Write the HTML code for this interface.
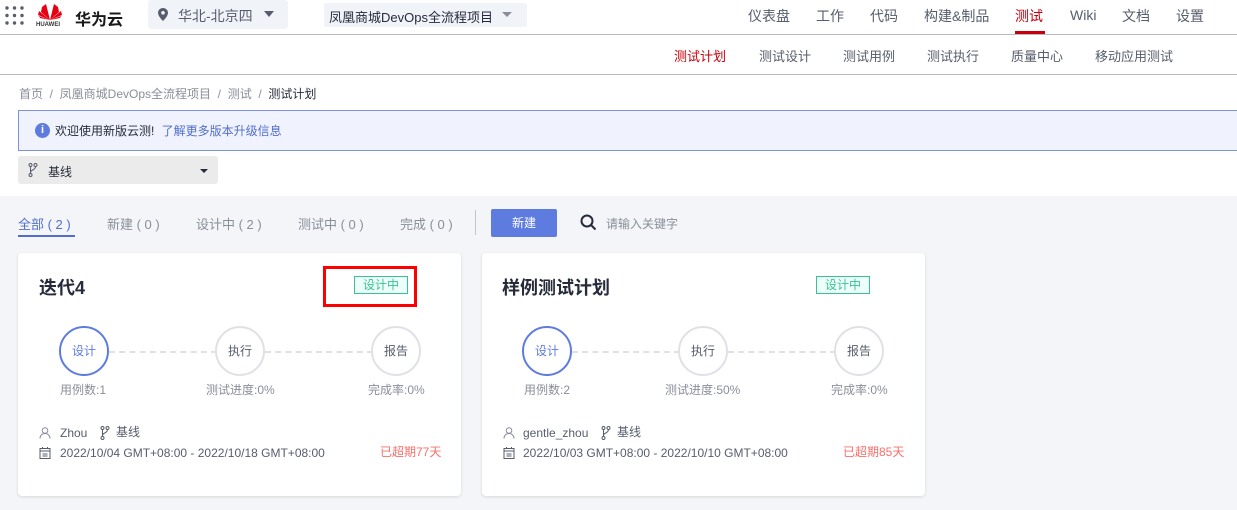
<!DOCTYPE html>
<html><head><meta charset="utf-8"><style>
*{margin:0;padding:0;box-sizing:border-box}
body{width:1237px;height:510px;overflow:hidden;background:#f3f5f8;font-family:"Liberation Sans","Noto Sans CJK SC",sans-serif;font-size:13px;color:#252b3a;position:relative}
.a{position:absolute;white-space:nowrap}
.top{position:absolute;left:0;top:0;width:1237px;height:196px;background:#fff}
.line{position:absolute;left:0;width:1237px;height:1px;background:#b8b8c2}
.nav{font-size:14px;color:#575d6c}
.sub{font-size:13px;color:#575d6c}
.card{position:absolute;top:253px;width:443px;height:243px;background:#fff;border-radius:4px;box-shadow:0 1px 3px rgba(0,0,0,.12)}
.circ{position:absolute;width:50px;height:50px;border-radius:50%;border:2px solid #dfe1e6;text-align:center;line-height:46px;font-size:12px;color:#575d6c;background:#fff}
.circ.on{border-color:#5e7ce0;color:#5e7ce0}
.dash{position:absolute;height:0;border-top:2px dashed #dfe1e6;top:98px}
.lbl{position:absolute;top:128px;font-size:12px;color:#8a8e99;white-space:nowrap}
.tag{position:absolute;top:23px;width:54px;height:18px;border:1px solid #3ac295;background:#edfff9;color:#3ac295;font-size:12px;text-align:center;line-height:16px}
.meta{position:absolute;font-size:12px;color:#575d6c;white-space:nowrap;line-height:16px}
.red{position:absolute;font-size:12px;color:#f66f6a;line-height:16px}
</style></head><body>
<div class="top"></div>
<div class="line" style="top:34px"></div>
<div class="line" style="top:74px"></div>
<svg class="a" style="left:5px;top:6px" width="19" height="19" viewBox="0 0 19 19" fill="#575d6c"><circle cx="2" cy="2" r="1.7"/><circle cx="9.5" cy="2" r="1.7"/><circle cx="17" cy="2" r="1.7"/><circle cx="2" cy="9.5" r="1.7"/><circle cx="9.5" cy="9.5" r="1.7"/><circle cx="17" cy="9.5" r="1.7"/><circle cx="2" cy="17" r="1.7"/><circle cx="9.5" cy="17" r="1.7"/><circle cx="17" cy="17" r="1.7"/></svg>
<svg class="a" style="left:37px;top:2px" width="26" height="20" viewBox="0 0 26 20" fill="#e60012"><path d="M13 18L9 2 5 5 4 10z"/><path d="M13 18L17 2 21 5 22 10z"/><path d="M13 18L2 9 1 13z"/><path d="M13 18L24 9 25 13z"/><path d="M13 18L3 16 2 14z"/><path d="M13 18L23 16 24 14z"/></svg>
<div class="a" style="left:36px;top:22px;font-size:6px;font-weight:bold;color:#333">HUAWEI</div>
<div class="a" style="left:75px;top:6px;font-size:16px;font-weight:bold;color:#191919">华为云</div>
<div class="a" style="left:148px;top:0;width:140px;height:29px;background:#f0f3f8;border-radius:3px"></div>
<svg class="a" style="left:158px;top:8px" width="10" height="13" viewBox="0 0 10 13"><path d="M5 0C2.2 0 0 2.2 0 4.8 0 8.5 5 13 5 13s5-4.5 5-8.2C10 2.2 7.8 0 5 0z" fill="#575d6c"/><circle cx="5" cy="4.8" r="1.8" fill="#f0f3f8"/></svg>
<div class="a" style="left:178px;top:6px;font-size:14px;color:#575d6c">华北-北京四</div>
<div class="a" style="left:264px;top:11px;width:0;height:0;border:5px solid transparent;border-top:6px solid #575d6c;border-bottom:0"></div>
<div class="a" style="left:324px;top:3px;width:203px;height:24px;background:#f0f3f8;border-radius:2px"></div>
<div class="a" style="left:329px;top:7px;font-size:13px;color:#252b3a">凤凰商城DevOps全流程项目</div>
<div class="a" style="left:502px;top:12px;width:0;height:0;border:5px solid transparent;border-top:5px solid #8a8e99;border-bottom:0"></div>
<div class="a nav" style="left:748px;top:6px">仪表盘</div>
<div class="a nav" style="left:816px;top:6px">工作</div>
<div class="a nav" style="left:870px;top:6px">代码</div>
<div class="a nav" style="left:924px;top:6px">构建&amp;制品</div>
<div class="a nav" style="left:1015px;top:6px;color:#c7000b">测试</div>
<div class="a" style="left:1015px;top:31px;width:30px;height:3px;background:#c7000b"></div>
<div class="a nav" style="left:1070px;top:7px">Wiki</div>
<div class="a nav" style="left:1122px;top:6px">文档</div>
<div class="a nav" style="left:1176px;top:6px">设置</div>
<div class="a sub" style="left:674px;top:46px;color:#c7000b">测试计划</div>
<div class="a sub" style="left:759px;top:46px">测试设计</div>
<div class="a sub" style="left:843px;top:46px">测试用例</div>
<div class="a sub" style="left:927px;top:46px">测试执行</div>
<div class="a sub" style="left:1011px;top:46px">质量中心</div>
<div class="a sub" style="left:1095px;top:46px">移动应用测试</div>
<div class="a" style="left:19px;top:85px;font-size:12px;color:#8a8e99">首页 &nbsp;/ &nbsp;凤凰商城DevOps全流程项目 &nbsp;/ &nbsp;测试 &nbsp;/ &nbsp;<span style="color:#252b3a">测试计划</span></div>
<div class="a" style="left:18px;top:110px;width:1230px;height:41px;background:#f0f3fd;border:1px solid #7d93e0"></div>
<div class="a" style="left:35px;top:123px;width:15px;height:15px;border-radius:50%;background:#5e7ce0;color:#fff;font-size:11px;font-weight:bold;text-align:center;line-height:15px">i</div>
<div class="a" style="left:55px;top:122px;font-size:12px;color:#252b3a">欢迎使用新版云测! <span style="color:#526ecc;margin-left:4px">了解更多版本升级信息</span></div>
<div class="a" style="left:18px;top:156px;width:200px;height:28px;background:#ebebeb;border-radius:3px"></div>
<svg class="a" style="left:28px;top:163px" width="10" height="14" viewBox="0 0 10 14" fill="none" stroke="#575d6c" stroke-width="1"><circle cx="2.5" cy="2" r="1.5"/><circle cx="7.5" cy="2" r="1.5"/><circle cx="2.5" cy="12" r="1.5"/><path d="M2.5 3.5v7M7.5 3.5c0 4-5 3-5 6"/></svg>
<div class="a" style="left:48px;top:163px;font-size:12px;color:#252b3a">基线</div>
<div class="a" style="left:200px;top:169px;width:0;height:0;border:4px solid transparent;border-top:4px solid #252b3a;border-bottom:0"></div>
<div class="a" style="left:18px;top:214px;font-size:13px;color:#526ecc">全部 ( 2 )</div>
<div class="a" style="left:18px;top:235px;width:57px;height:2px;background:#526ecc"></div>
<div class="a" style="left:107px;top:214px;font-size:13px;color:#8a8e99">新建 ( 0 )</div>
<div class="a" style="left:196px;top:214px;font-size:13px;color:#8a8e99">设计中 ( 2 )</div>
<div class="a" style="left:298px;top:214px;font-size:13px;color:#8a8e99">测试中 ( 0 )</div>
<div class="a" style="left:400px;top:214px;font-size:13px;color:#8a8e99">完成 ( 0 )</div>
<div class="a" style="left:475px;top:210px;width:1px;height:25px;background:#c0c4cc"></div>
<div class="a" style="left:491px;top:209px;width:66px;height:28px;background:#5e7ce0;border-radius:2px;color:#fff;font-size:12px;text-align:center;line-height:28px">新建</div>
<svg class="a" style="left:580px;top:214px" width="17" height="17" viewBox="0 0 17 17" fill="none" stroke="#252b3a" stroke-width="2"><circle cx="7" cy="7" r="5.5"/><path d="M11 11l4.5 4.5"/></svg>
<div class="a" style="left:606px;top:215px;font-size:12px;color:#8a8e99">请输入关键字</div>

<div class="card" style="left:18px">
<div class="a" style="left:21px;top:21px;font-size:18px;font-weight:bold;color:#252b3a">迭代4</div>
<div class="tag" style="left:336px">设计中</div>
<div class="a" style="left:305px;top:13px;width:94px;height:41px;border:3px solid #f00"></div>
<div class="dash" style="left:91px;width:108px"></div><div class="dash" style="left:247px;width:108px"></div>
<div class="circ on" style="left:41px;top:73px">设计</div>
<div class="circ" style="left:197px;top:73px">执行</div>
<div class="circ" style="left:353px;top:73px">报告</div>
<div class="lbl" style="left:42px">用例数:1</div>
<div class="lbl" style="left:188px">测试进度:0%</div>
<div class="lbl" style="left:350px">完成率:0%</div>
<svg class="a" style="left:21px;top:174px" width="12" height="12" viewBox="0 0 12 12" fill="none" stroke="#8a8e99"><circle cx="6" cy="3.5" r="2.8"/><path d="M1 11.5c0-3 2.2-5 5-5s5 2 5 5"/></svg>
<div class="meta" style="left:42px;top:172px">Zhou</div>
<svg class="a" style="left:82px;top:173px" width="10" height="14" viewBox="0 0 10 14" fill="none" stroke="#575d6c"><circle cx="2.5" cy="2" r="1.5"/><circle cx="7.5" cy="2" r="1.5"/><circle cx="2.5" cy="12" r="1.5"/><path d="M2.5 3.5v7M7.5 3.5c0 4-5 3-5 6"/></svg>
<div class="meta" style="left:98px;top:171px">基线</div>
<svg class="a" style="left:21px;top:194px" width="12" height="12" viewBox="0 0 12 12" fill="none" stroke="#575d6c"><rect x="1" y="1.5" width="10" height="10"/><path d="M1 4h10M3.5 7h5M3.5 9h5M3.5 0v2M8.5 0v2"/></svg>
<div class="meta" style="left:42px;top:192px">2022/10/04 GMT+08:00 - 2022/10/18 GMT+08:00</div>
<div class="red" style="left:362px;top:191px">已超期77天</div>
</div>

<div class="card" style="left:482px">
<div class="a" style="left:20px;top:21px;font-size:18px;font-weight:bold;color:#252b3a">样例测试计划</div>
<div class="tag" style="left:334px">设计中</div>
<div class="dash" style="left:90px;width:108px"></div><div class="dash" style="left:246px;width:108px"></div>
<div class="circ on" style="left:40px;top:73px">设计</div>
<div class="circ" style="left:196px;top:73px">执行</div>
<div class="circ" style="left:352px;top:73px">报告</div>
<div class="lbl" style="left:42px">用例数:2</div>
<div class="lbl" style="left:183px">测试进度:50%</div>
<div class="lbl" style="left:349px">完成率:0%</div>
<svg class="a" style="left:21px;top:174px" width="12" height="12" viewBox="0 0 12 12" fill="none" stroke="#8a8e99"><circle cx="6" cy="3.5" r="2.8"/><path d="M1 11.5c0-3 2.2-5 5-5s5 2 5 5"/></svg>
<div class="meta" style="left:41px;top:172px">gentle_zhou</div>
<svg class="a" style="left:119px;top:173px" width="10" height="14" viewBox="0 0 10 14" fill="none" stroke="#575d6c"><circle cx="2.5" cy="2" r="1.5"/><circle cx="7.5" cy="2" r="1.5"/><circle cx="2.5" cy="12" r="1.5"/><path d="M2.5 3.5v7M7.5 3.5c0 4-5 3-5 6"/></svg>
<div class="meta" style="left:135px;top:171px">基线</div>
<svg class="a" style="left:21px;top:194px" width="12" height="12" viewBox="0 0 12 12" fill="none" stroke="#575d6c"><rect x="1" y="1.5" width="10" height="10"/><path d="M1 4h10M3.5 7h5M3.5 9h5M3.5 0v2M8.5 0v2"/></svg>
<div class="meta" style="left:41px;top:192px">2022/10/03 GMT+08:00 - 2022/10/10 GMT+08:00</div>
<div class="red" style="left:361px;top:191px">已超期85天</div>
</div>
</body></html>
